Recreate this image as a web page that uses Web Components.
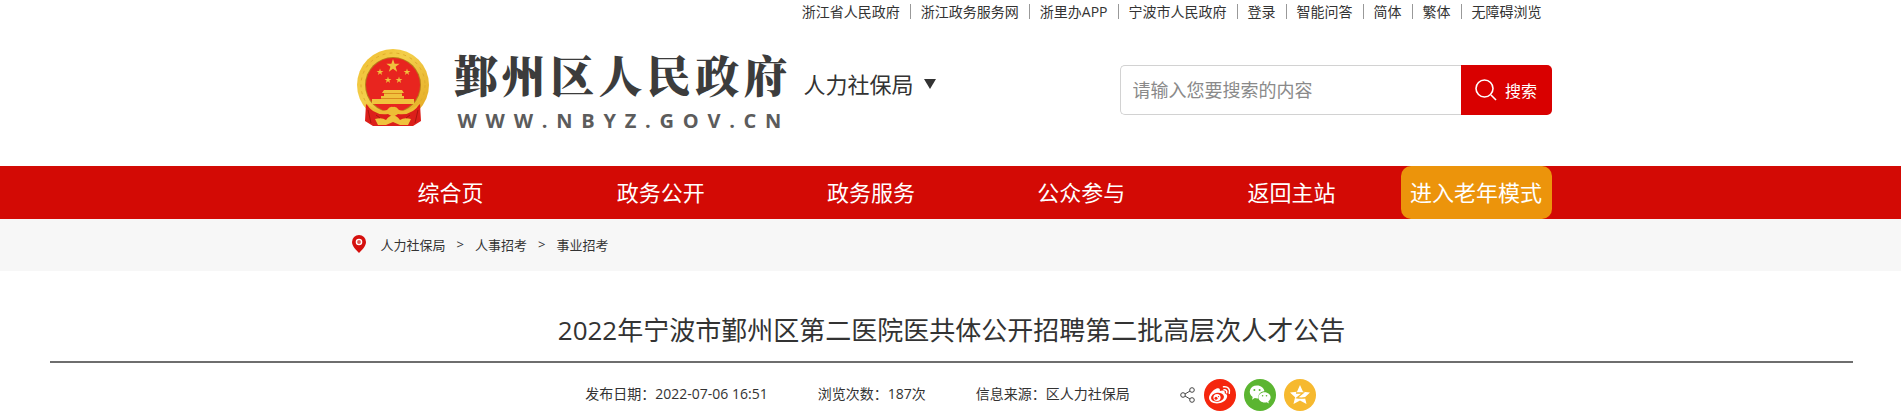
<!DOCTYPE html>
<html lang="zh-CN">
<head>
<meta charset="utf-8">
<title>鄞州区人民政府</title>
<style>
  body {
    margin: 0;
    background: #fff;
    color: #333;
    font-family: "Open Sans", "Noto Sans CJK SC", sans-serif;
    font-size: 14px;
  }
</style>
</head>
<body>
<gov-page></gov-page>
<script>
function define(name, html) {
  const template = document.createElement('template');
  template.innerHTML = html;
  customElements.define(name, class extends HTMLElement {
    constructor() {
      super();
      this.attachShadow({ mode: 'open' }).append(template.content.cloneNode(true));
    }
  });
}

define('top-links', `
<style>
  :host { display: block; }
  nav { display: flex; justify-content: flex-end; align-items: center; height: 22px; }
  ::slotted(a) { color: #333; text-decoration: none; padding: 0 10px; line-height: 15px; border-left: 1px solid #999; }
  ::slotted(a:first-child) { border-left: 0; }
</style>
<nav aria-label="快捷链接"><slot></slot></nav>`);

define('national-emblem', `
<style>:host { display: block; width: 74px; height: 78px; } svg { display: block; }</style>
<svg width="74" height="78" viewBox="0 0 74 78" aria-hidden="true">
  <defs>
    <linearGradient id="g" x1="0" y1="0" x2="1" y2="1"><stop offset="0" stop-color="#f0bd2f"/><stop offset=".4" stop-color="#f3cf4b"/><stop offset="1" stop-color="#e3a51e"/></linearGradient>
    <path id="s" d="M0-10 2.3-3.1H9.5L3.7 1.2 5.9 8.1 0 3.8-5.9 8.1-3.7 1.2-9.5-3.1H-2.3Z"/>
  </defs>
  <circle cx="37" cy="36" r="36" fill="url(#g)"/>
  <circle cx="37" cy="36" r="32" fill="none" stroke="#e0ac2c" stroke-width="1" stroke-dasharray="3 4"/>
  <circle cx="37" cy="36" r="28" fill="#b97b19"/>
  <circle cx="37" cy="36" r="27" fill="#e8251f"/>
  <g fill="#f0c23d">
    <use href="#s" transform="translate(37 17) scale(.7)"/>
    <use href="#s" transform="translate(24 23) scale(.36)"/>
    <use href="#s" transform="translate(51 23) scale(.36)"/>
    <use href="#s" transform="translate(32 31) scale(.36)"/>
    <use href="#s" transform="translate(43 31) scale(.36)"/>
    <path d="M28 41H46L48 44H46V47H48V50H58V55H16V50H25V47H28V44H26Z"/>
  </g>
  <path d="M28 44.500H46M25 49.500H48" stroke="#d98a1e" stroke-width="1" fill="none"/>
  <path d="M10 55Q22 66 33 62H41Q52 66 64 55L65 72 57 77H17L9 72Z" fill="#dc1f1a"/>
  <path d="M10 54Q22 64 31 61Q34 57 37 58 40 57 43 61Q52 64 64 54Q57 67 42 65L37 68 32 65Q17 67 10 54Z" fill="#edbd35"/>
  <path d="M19 70Q26 68 30 71 34 66 37 67 40 66 44 71 48 68 55 70L52 76H44L37 73 30 76H22Z" fill="#f0c23d"/>
  <path d="M12 61 15 74M62 61 59 74M20 66 24 69M54 66 50 69" stroke="#a9150f" stroke-width="1"/>
</svg>`);

define('site-brand', `
<style>
  :host { display: flex; align-items: flex-start; }
  .mark { margin: 4px 0 0 6px; }
  .words { margin-left: 24px; width: 334px; color: #3c3c3c; }
  .name, .url { display: flex; justify-content: space-between; }
  .name { padding-bottom: 6px; font: 900 44px/58px "Noto Serif CJK SC", "Noto Sans CJK SC", serif; }
  .url { margin: 0 6px 0 4px; color: #5c5c5c; font: 700 20px/24px "Open Sans", sans-serif; }
  a { color: inherit; text-decoration: none; }
  button { display: flex; align-items: center; gap: 10px; margin: 24px 0 0 16px; padding: 0; border: 0; background: none; color: #333; font: inherit; font-size: 22px; line-height: 30px; }
  .arrow { border: 6px solid transparent; border-top: 10px solid #333; border-bottom: 0; }
</style>
<national-emblem class="mark"></national-emblem>
<a class="words" href="#"><div class="name"><span>鄞</span><span>州</span><span>区</span><span>人</span><span>民</span><span>政</span><span>府</span></div><div class="url"><span>W</span><span>W</span><span>W</span><span>.</span><span>N</span><span>B</span><span>Y</span><span>Z</span><span>.</span><span>G</span><span>O</span><span>V</span><span>.</span><span>C</span><span>N</span></div></a>
<button type="button"><slot></slot><span class="arrow"></span></button>`);

define('search-box', `
<style>
  :host { display: block; }
  form { display: flex; width: 432px; height: 50px; }
  input { flex: 1; min-width: 0; box-sizing: border-box; border: 1px solid #d2d2d2; border-right: 0; border-radius: 5px 0 0 5px; padding: 0 12px; font: inherit; font-size: 18px; color: #333; background: #fff; outline: 0; }
  input::placeholder { color: #8a8a8a; opacity: 1; }
  button { display: flex; align-items: center; justify-content: center; gap: 8px; width: 91px; padding: 0; border: 0; border-radius: 0 5px 5px 0; background: #d90000; color: #fff; font: inherit; font-size: 16px; }
</style>
<form role="search" onsubmit="return false">
  <input type="text" aria-label="搜索内容" placeholder="请输入您要搜索的内容">
  <button type="submit"><svg width="22" height="22" viewBox="0 0 22 22" fill="none" stroke="#fff" stroke-width="1.600" aria-hidden="true"><circle cx="9.500" cy="9.500" r="8.500"/><path d="M16 16 21 21"/></svg>搜索</button>
</form>`);

define('main-nav', `
<style>
  :host { display: block; background: #d30a05; }
  nav { display: flex; gap: 8px; max-width: 1202px; margin: 0 auto; }
  ::slotted(a) { flex: 1; color: #fff; text-decoration: none; text-align: center; font-size: 22px; line-height: 53px; white-space: nowrap; }
  ::slotted(a.elder) { flex: 0 0 151px; background: #ec940b; border-radius: 10px; }
</style>
<nav aria-label="主导航"><slot></slot></nav>`);

define('bread-crumb', `
<style>
  :host { display: block; background: #f7f7f7; }
  nav { display: flex; align-items: center; gap: 11px; max-width: 1200px; height: 50px; padding-bottom: 2px; margin: 0 auto; font-size: 13px; }
  svg { margin: 0 4px 0 1px; }
  ::slotted(a) { color: #333; text-decoration: none; }
</style>
<nav aria-label="当前位置">
  <svg width="14" height="18" viewBox="0 0 14 18" aria-hidden="true"><path d="M7 0A7 7 0 0 1 14 7C14 11 10 15 7 18 4 15 0 11 0 7A7 7 0 0 1 7 0Z" fill="#d5100e"/><circle cx="7" cy="7" r="2.600" fill="#e25a55" stroke="#fff" stroke-width="1.400"/></svg>
  <slot></slot>
</nav>`);

define('share-bar', `
<style>
  :host { display: flex; align-items: center; gap: 8px; }
  a, svg { display: block; }
</style>
<svg width="16" height="16" viewBox="0 0 16 16" fill="none" stroke="#444" stroke-width="1" aria-hidden="true"><circle cx="3" cy="8" r="2.300"/><circle cx="12" cy="3" r="2.300"/><circle cx="12" cy="13" r="2.300"/><path d="M5 7 10 4M5 9 10 12"/></svg>
<a href="#" aria-label="微博"><svg width="32" height="32" viewBox="0 0 32 32"><circle cx="16" cy="16" r="16" fill="#f5260d"/><path d="M12.500 9.500C15 8.500 16.500 9.600 15.800 12 19 10.800 21.500 11.500 20.700 14.300 23 15 23.600 16.600 23 18.300 21.700 22.300 17.500 24.500 13 24.500 8.500 24.500 5 22.200 5 18.800 5 15.500 9 11 12.500 9.500Z" fill="#fff"/><ellipse cx="13.500" cy="18.300" rx="6.500" ry="4.500" transform="rotate(-8 13.500 18.300)" fill="#f5260d"/><circle cx="13" cy="18.500" r="3.600" fill="#fff"/><circle cx="12" cy="19.300" r="1.500" fill="#f5260d"/><circle cx="14.500" cy="17.600" r=".7" fill="#f5260d"/><path d="M19.500 7.800C23.800 7 26.600 10.500 25.300 14.300M20 10.800C22 10.500 23.200 12 22.600 13.700" fill="none" stroke="#fff" stroke-width="1.500" stroke-linecap="round"/></svg></a>
<a href="#" aria-label="微信"><svg width="32" height="32" viewBox="0 0 32 32"><circle cx="16" cy="16" r="16" fill="#5bb531"/><path d="M13 6.500C17 6.500 20 9 20.400 12.200 16 12.500 13.600 16 14.600 19.500Q12.500 19.700 10.800 19.100L8 20.700 8.700 18.100C3.500 14.500 5.500 6.500 13 6.500Z" fill="#fff"/><path d="M20.500 13.200C24 13.200 26.600 15.500 26.600 18.300 26.600 20 25.700 21.500 24.300 22.500L24.900 24.500 22.700 23.300C18.500 24.300 14.500 22 14.500 18.300 14.500 15.500 17.100 13.200 20.500 13.200Z" fill="#fff"/><g fill="#5bb531"><circle cx="10.400" cy="11" r="1"/><circle cx="15.600" cy="11" r="1"/><circle cx="18.600" cy="16.800" r=".8"/><circle cx="22.500" cy="16.800" r=".8"/></g></svg></a>
<a href="#" aria-label="QQ空间"><svg width="32" height="32" viewBox="0 0 32 32"><circle cx="16" cy="16" r="16" fill="#f6b92f"/><path d="M16 6 19 12.700 26 13.500 20.900 18.200 22.500 25 16 21.600 9.500 25 11.100 18.200 6 13.500 13 12.700Z" fill="#fff"/><path d="M12 14H19L13 18.800Q17 19.500 21.500 18.800" fill="none" stroke="#f6b92f" stroke-width="1.400"/></svg></a>`);

define('article-head', `
<style>
  :host { display: block; }
  header { margin: 0 48px 0 50px; border-bottom: 2px solid #6e6e6e; padding: 40px 0 12px; }
  ::slotted(h1) { margin: 0; font-size: 26px; font-weight: 400; line-height: 38px; text-align: center; }
  .meta { display: flex; justify-content: center; align-items: center; gap: 50px; height: 48px; padding-top: 8px; }
  .meta ::slotted(span) { padding-bottom: 4px; }
</style>
<header><slot name="title"></slot></header>
<div class="meta"><slot></slot><share-bar></share-bar></div>`);

define('gov-page', `
<style>
  :host { display: block; }
  .wrap { max-width: 1202px; margin: 0 auto; }
  .bar { display: flex; justify-content: space-between; align-items: flex-start; height: 144px; }
  site-brand { margin-top: 23px; }
  search-box { margin-top: 43px; }
</style>
<div class="wrap">
  <top-links><a href="#">浙江省人民政府</a><a href="#">浙江政务服务网</a><a href="#">浙里办APP</a><a href="#">宁波市人民政府</a><a href="#">登录</a><a href="#">智能问答</a><a href="#">简体</a><a href="#">繁体</a><a href="#">无障碍浏览</a></top-links>
  <div class="bar"><site-brand>人力社保局</site-brand><search-box></search-box></div>
</div>
<main-nav><a href="#">综合页</a><a href="#">政务公开</a><a href="#">政务服务</a><a href="#">公众参与</a><a href="#">返回主站</a><a href="#" class="elder">进入老年模式</a></main-nav>
<bread-crumb><a href="#">人力社保局</a><span>&gt;</span><a href="#">人事招考</a><span>&gt;</span><a href="#">事业招考</a></bread-crumb>
<article-head>
  <h1 slot="title">2022年宁波市鄞州区第二医院医共体公开招聘第二批高层次人才公告</h1>
  <span>发布日期：2022-07-06 16:51</span><span>浏览次数：187次</span><span>信息来源：区人力社保局</span>
</article-head>`);
</script>
</body>
</html>
